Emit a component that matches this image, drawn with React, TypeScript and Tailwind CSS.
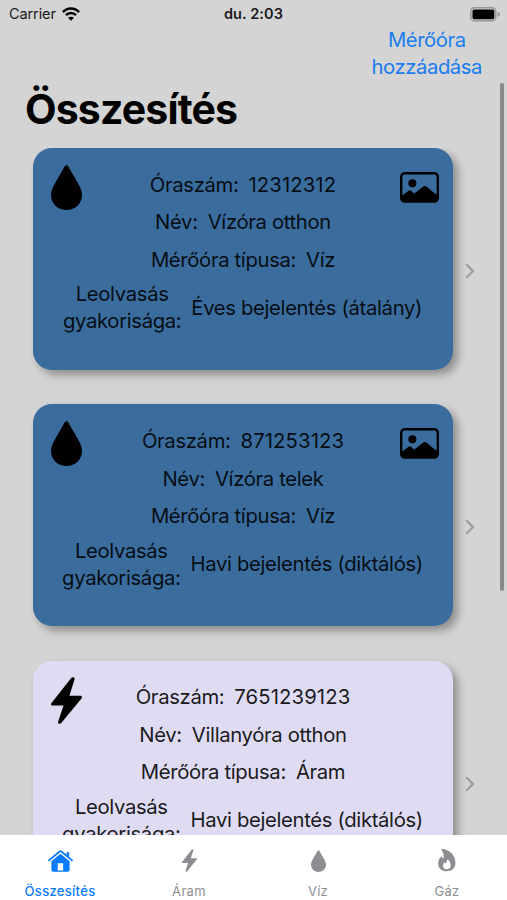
import type { ReactNode } from 'react';

type IconProps = { className?: string };

function DropIcon({ className }: IconProps) {
  return (
    <svg viewBox="0 0 31 45" className={className} fill="currentColor">
      <path d="M13.9 1.1C14.6-.1 16.4-.1 17.1 1.1 19.6 5.8 23.4 11.8 27 18.3 29.4 22.6 31 26.2 31 29.8 31 38.8 24.4 45 15.5 45S0 38.8 0 29.8C0 26.2 1.6 22.6 4 18.3 7.6 11.8 11.4 5.8 13.9 1.1Z" />
    </svg>
  );
}

function BoltIcon({ className }: IconProps) {
  return (
    <svg viewBox="0 0 31 47" className={className} fill="currentColor">
      <path d="M20.2.9C21.5-.5 24.2.1 23.6 2.3L18.4 18.8H29.5C30.9 18.8 31.4 20.2 30.5 21.4L10.3 46.1C9 47.5 6.4 46.8 7.1 44.8L12.5 28.6H1.3C0 28.6-.4 27 .5 25.9Z" />
    </svg>
  );
}

function FlameIcon({ className }: IconProps) {
  return (
    <svg viewBox="0 0 18 23" className={className} fill="currentColor">
      <path
        fillRule="evenodd"
        d="M3.4.8C3 .3 3.4 0 4 0 11.2.3 17.4 5.7 17.4 14.1 17.4 19.1 14 22.3 8.8 22.3 3.6 22.3.2 19 .2 14.4.2 11.7 1.3 9 3 7.7 3.4 7.4 3.8 7.6 4 8 4.3 8.8 4.7 9.4 5.3 9.8 6.2 7 5.7 3.8 3.4.8ZM9.1 10.5C9.3 12.4 8.4 13.6 7.4 14.4 7 14.1 6.7 13.8 6.5 13.4 5.5 14.2 5 15.2 5 16.4 5 18.7 6.6 20.2 8.8 20.2 11.1 20.2 12.7 18.6 12.7 16.2 12.7 13.4 11.3 11.3 9.1 10.5Z"
      />
    </svg>
  );
}

function HouseIcon({ className }: IconProps) {
  return (
    <svg viewBox="0 0 25 22" className={className}>
      <path d="M1 10.4 11.6 1.5Q12.5.9 13.4 1.5L24 10.4" fill="none" stroke="currentColor" strokeWidth="1.8" strokeLinecap="round" strokeLinejoin="round" />
      <path d="M18.6 2.2h2.6v6l-2.6-2.3Z" fill="currentColor" />
      <path fillRule="evenodd" fill="currentColor" d="M12.5 3.7 21.6 11.3V20Q21.6 21.8 19.8 21.8H5.2Q3.4 21.8 3.4 20V11.3ZM9.8 13.2V20.5H15.2V13.2Z" />
    </svg>
  );
}

function PhotoIcon({ className }: IconProps) {
  return (
    <svg viewBox="0 0 39 31" className={className}>
      <rect x="1.2" y="1.2" width="36.6" height="28.4" rx="3.6" fill="none" stroke="currentColor" strokeWidth="2.4" />
      <circle cx="12.4" cy="11.3" r="4" fill="currentColor" />
      <path fill="currentColor" d="M1.5 24 8.6 18.8Q9.8 17.9 11 18.8L14.3 21.5 23.2 14.6Q24.8 13.5 26.4 14.6L37.6 23.7V27Q37.6 29.6 35 29.6H4Q1.5 29.6 1.5 27Z" />
    </svg>
  );
}

function WifiIcon({ className }: IconProps) {
  return (
    <svg viewBox="0 0 18 14" className={className} fill="none" stroke="currentColor" strokeWidth="2.4">
      <path d="M.9 5.1C5.5.2 12.5.2 17.1 5.1" />
      <path d="M3.9 8.2C6.8 5.2 11.2 5.2 14.1 8.2" />
      <path d="M9 13.8 6.1 10.8C7.7 9.3 10.3 9.3 11.9 10.8Z" fill="currentColor" stroke="none" />
    </svg>
  );
}

function BatteryIcon({ className }: IconProps) {
  return (
    <svg viewBox="0 0 31 15" className={className}>
      <rect x=".8" y=".8" width="25" height="13" rx="3.6" fill="none" stroke="#979797" strokeWidth="1.5" />
      <rect x="2.5" y="2.6" width="21.8" height="9.6" rx="1.6" fill="#000" />
      <path d="M27.6 5C30.8 5.5 30.8 9.2 27.6 9.7Z" fill="#979797" />
    </svg>
  );
}

const meters = [
  {
    id: '12312312',
    name: 'Vízóra otthon',
    type: 'Víz',
    frequency: 'Éves bejelentés (átalány)',
    icon: DropIcon,
    iconClass: 'top-[17px] h-[45px]',
    color: 'bg-[#3a6d9e]',
    photo: true,
  },
  {
    id: '871253123',
    name: 'Vízóra telek',
    type: 'Víz',
    frequency: 'Havi bejelentés (diktálós)',
    icon: DropIcon,
    iconClass: 'top-[17px] h-[45px]',
    color: 'bg-[#3a6d9e]',
    photo: true,
  },
  {
    id: '7651239123',
    name: 'Villanyóra otthon',
    type: 'Áram',
    frequency: 'Havi bejelentés (diktálós)',
    icon: BoltIcon,
    iconClass: 'top-4 h-[47px]',
    color: 'bg-[#dfdbf3]',
    photo: false,
  },
];

const tabs = [
  { label: 'Összesítés', icon: HouseIcon, iconClass: 'w-[25px] h-[22px]', active: true },
  { label: 'Áram', icon: BoltIcon, iconClass: 'w-[15px] h-[23px]', active: false },
  { label: 'Víz', icon: DropIcon, iconClass: 'w-[15px] h-[22px]', active: false },
  { label: 'Gáz', icon: FlameIcon, iconClass: 'w-[18px] h-[23px]', active: false },
];

function Row({ label, children }: { label: string; children: ReactNode }) {
  return (
    <div className="flex gap-2.5 mb-[10.5px]">
      <span>{label}</span>
      {children}
    </div>
  );
}

function MeterRow({ meter }: { meter: (typeof meters)[number] }) {
  const Icon = meter.icon;
  return (
    <div className="flex items-center">
      <div
        className={`relative w-[420px] h-[222px] shrink-0 rounded-[19px] pt-[22.6px] flex flex-col items-center whitespace-nowrap text-[20.3px] leading-[27px] tracking-[-0.35px] text-black/90 shadow-[5px_5px_9px_rgba(0,0,0,0.33)] ${meter.color}`}
      >
        <Icon className={`absolute left-[18px] w-[31px] text-black ${meter.iconClass}`} />
        {meter.photo && <PhotoIcon className="absolute top-6 right-3.5 w-[39px] h-[31px] text-black" />}
        <Row label="Óraszám:">
          <span className="tracking-[0.1px]">{meter.id}</span>
        </Row>
        <Row label="Név:">
          <span>{meter.name}</span>
        </Row>
        <Row label="Mérőóra típusa:">
          <span>{meter.type}</span>
        </Row>
        <div className="flex items-center gap-2.5 -mt-[3px] pr-px">
          <span className="text-center">
            Leolvasás
            <br />
            gyakorisága:
          </span>
          <span>{meter.frequency}</span>
        </div>
      </div>
      <svg viewBox="0 0 10 16" className="w-2.5 h-4 ml-3 mt-6" fill="none" stroke="#a0a0a2" strokeWidth="2.4" strokeLinecap="round" strokeLinejoin="round">
        <path d="M2 2l6 6-6 6" />
      </svg>
    </div>
  );
}

export default function App() {
  return (
    <div className="relative w-[507px] h-[900px] overflow-hidden flex flex-col bg-[#d4d4d4] font-['Inter','Liberation_Sans',sans-serif]">
      <div className="grid grid-cols-3 items-center h-7 shrink-0 pl-[9px] pr-[6px] text-[14.5px] text-[#1a1a1a]">
        <div className="flex items-center gap-[6px]">
          <span className="tracking-[-0.1px]">Carrier</span>
          <WifiIcon className="w-[18px] h-3.5 text-black" />
        </div>
        <div className="text-center font-semibold pr-[3px] tracking-[0.1px]">du. 2:03</div>
        <BatteryIcon className="w-[31px] h-[15px] justify-self-end" />
      </div>

      <div className="flex justify-end h-[52px] shrink-0 pr-[25px] -mt-[2px]">
        <button className="text-center self-start text-[20.3px] leading-[27px] tracking-[-0.45px] text-[#1a7df0]">
          Mérőóra
          <br />
          hozzáadása
        </button>
      </div>

      <h1 className="h-[70px] shrink-0 pl-[25px] pt-[6px] text-[41px] leading-[50px] font-bold tracking-[-0.85px] text-black">
        Összesítés
      </h1>

      <div className="flex-1 min-h-0 overflow-hidden pl-[33px] flex flex-col gap-[34.45px]">
        {meters.map((meter) => (
          <MeterRow key={meter.id} meter={meter} />
        ))}
      </div>

      <div className="absolute right-[3.5px] top-[83px] w-[4px] h-[508px] rounded-full bg-[#898989]" />

      <nav className="h-[65.5px] shrink-0 bg-white flex -mx-[4.5px]">
        {tabs.map((tab) => {
          const Icon = tab.icon;
          return (
            <div
              key={tab.label}
              className={`flex-1 flex flex-col items-center pt-3.5 ${tab.active ? 'text-[#0a7aff] font-medium' : 'text-[#8e8e92]'}`}
            >
              <div className="h-6 flex items-center">
                <Icon className={tab.iconClass} />
              </div>
              <span className="mt-[9px] text-[13px] leading-[18px] tracking-[0.3px]">{tab.label}</span>
            </div>
          );
        })}
      </nav>
    </div>
  );
}
